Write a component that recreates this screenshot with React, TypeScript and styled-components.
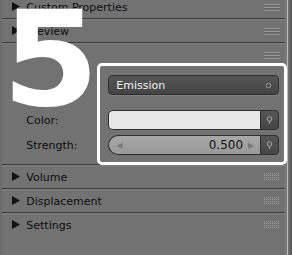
import React from "react";
import styled, { createGlobalStyle } from "styled-components";

const GlobalStyle = createGlobalStyle`
  html, body {
    margin: 0;
    padding: 0;
    background: #727272;
    overflow: hidden;
  }
`;

const Frame = styled.div`
  position: relative;
  width: 292px;
  height: 255px;
  overflow: hidden;
  display: flex;
  background: #727272;
  font-family: "DejaVu Sans", "Liberation Sans", sans-serif;
  font-size: 11px;
  color: #0d0d0d;
`;

const LeftEdge = styled.div`
  width: 3px;
  background: #6b6b6b;
`;

const Panel = styled.div`
  flex: 1;
  display: flex;
  flex-direction: column;
  margin-top: -6px;
`;

const RightEdge = styled.div`
  width: 6px;
  display: flex;
  background: #6e6e6e;
  &::before {
    content: "";
    width: 2px;
    background: #7a7a7a;
  }
  &::after {
    content: "";
    width: 1px;
    background: #b9b9c6;
  }
`;

const Tail = styled.div`
  width: 3px;
  background: #5a5a5a;
`;

const Header = styled.div`
  height: 23px;
  display: flex;
  align-items: center;
  border-top: 1px solid #3a3a3a;
  box-shadow: inset 0 1px 0 #7f7f7f;
  padding-left: 10px;
  padding-right: 5px;
`;

const Arrow = styled.svg`
  width: 8px;
  height: 9px;
  margin-right: 6px;
  flex-shrink: 0;
`;

const Title = styled.span`
  flex: 1;
  white-space: nowrap;
  padding-top: 1px;
`;

const Grip = styled.svg`
  width: 16px;
  height: 8px;
  flex-shrink: 0;
`;

const Body = styled.div`
  height: 98px;
  box-sizing: border-box;
  padding: 9px 6px 0 24px;
  display: flex;
  flex-direction: column;
`;

const Line = styled.div<{ $gap: number }>`
  height: 20px;
  margin-top: ${(p) => p.$gap}px;
  display: grid;
  grid-template-columns: 82px 171px;
  align-items: center;
`;

const Label = styled.span`
  white-space: nowrap;
`;

const Dropdown = styled.div`
  height: 20px;
  box-sizing: border-box;
  border: 1px solid #2f2f2f;
  border-radius: 4px;
  background: linear-gradient(#555555, #444444);
  color: #f2f2f2;
  display: flex;
  align-items: center;
  padding: 0 6px 0 7px;
  box-shadow: 0 1px 0 #808080;
`;

const DropText = styled.span`
  flex: 1;
  padding-top: 1px;
`;

const FieldRow = styled.div`
  height: 20px;
  display: flex;
`;

const Field = styled.div<{ $kind: "color" | "slider" }>`
  flex: 1;
  box-sizing: border-box;
  border: 1px solid #2f2f2f;
  border-right: none;
  border-radius: ${(p) => (p.$kind === "color" ? "5px 0 0 5px" : "10px 0 0 10px")};
  background: ${(p) =>
    p.$kind === "color" ? "#e8e8e8" : "linear-gradient(#a8a8a8, #999999)"};
  display: flex;
  align-items: center;
  padding: 0 6px 0 7px;
  color: #111;
  font-size: 12px;
`;

const SideButton = styled.div`
  width: 19px;
  box-sizing: border-box;
  border: 1px solid #2f2f2f;
  border-radius: 0 4px 4px 0;
  background: linear-gradient(#565656, #464646);
  display: flex;
  align-items: center;
  justify-content: center;
`;

const Value = styled.span`
  flex: 1;
  text-align: right;
  padding-right: 5px;
`;

const Nudge = styled.span`
  color: #7a7a7a;
  font-size: 8px;
`;

const Highlight = styled.div`
  position: absolute;
  left: 97px;
  top: 63px;
  width: 190px;
  height: 102px;
  box-sizing: border-box;
  border: 3px solid #ffffff;
  border-radius: 5px;
  pointer-events: none;
`;

const Step = styled.div`
  position: absolute;
  left: 2px;
  top: -7px;
  font-family: "DejaVu Sans", sans-serif;
  font-weight: bold;
  font-size: 132px;
  line-height: 1;
  color: #ffffff;
  transform: scaleX(1.06);
  transform-origin: left top;
`;

const LineGrip = () => (
  <Grip viewBox="0 0 16 8">
    <rect x="0" y="1" width="16" height="1" fill="#959595" />
    <rect x="0" y="2" width="16" height="1" fill="#666" />
    <rect x="0" y="4" width="16" height="1" fill="#959595" />
    <rect x="0" y="5" width="16" height="1" fill="#666" />
    <rect x="0" y="7" width="16" height="1" fill="#959595" />
  </Grip>
);

const DotGrip = () => (
  <Grip viewBox="0 0 16 8">
    {[0, 2, 4, 6].map((y) =>
      [0, 2, 4, 6, 8, 10, 12, 14].map((x) => (
        <rect key={`${x}-${y}`} x={x} y={y} width="1" height="1" fill="#a0a0a0" />
      ))
    )}
  </Grip>
);

const PanelHeader = ({
  title,
  dots,
  arrow = true,
}: {
  title: string;
  dots?: boolean;
  arrow?: boolean;
}) => (
  <Header>
    {arrow ? (
      <Arrow viewBox="0 0 8 9">
        <polygon points="0,0 8,4.5 0,9" fill="#111" />
      </Arrow>
    ) : (
      <Arrow viewBox="0 0 8 9" />
    )}
    <Title>{title}</Title>
    {dots ? <DotGrip /> : <LineGrip />}
  </Header>
);

const PinIcon = () => (
  <svg width="7" height="9" viewBox="0 0 7 9">
    <circle cx="3.5" cy="3" r="2.3" fill="none" stroke="#a8a8a8" strokeWidth="1" />
    <rect x="3" y="5" width="1" height="3" fill="#a8a8a8" />
  </svg>
);

export default function App() {
  return (
    <>
      <GlobalStyle />
      <Frame>
        <LeftEdge />
        <Panel>
          <PanelHeader title="Custom Properties" />
          <PanelHeader title="Preview" />
          <PanelHeader title="" arrow={false} />
          <Body>
            <Line $gap={0}>
              <span />
              <Dropdown>
                <DropText>Emission</DropText>
                <svg width="7" height="7" viewBox="0 0 7 7">
                  <circle cx="3.5" cy="3.5" r="2.3" fill="none" stroke="#9a9a9a" strokeWidth="1" />
                </svg>
              </Dropdown>
            </Line>
            <Line $gap={15}>
              <Label>Color:</Label>
              <FieldRow>
                <Field $kind="color" />
                <SideButton>
                  <PinIcon />
                </SideButton>
              </FieldRow>
            </Line>
            <Line $gap={5}>
              <Label>Strength:</Label>
              <FieldRow>
                <Field $kind="slider">
                  <Nudge>◀</Nudge>
                  <Value>0.500</Value>
                  <Nudge>▶</Nudge>
                </Field>
                <SideButton>
                  <PinIcon />
                </SideButton>
              </FieldRow>
            </Line>
          </Body>
          <PanelHeader title="Volume" dots />
          <PanelHeader title="Displacement" dots />
          <PanelHeader title="Settings" dots />
        </Panel>
        <RightEdge />
        <Tail />
        <Highlight />
        <Step>5</Step>
      </Frame>
    </>
  );
}
